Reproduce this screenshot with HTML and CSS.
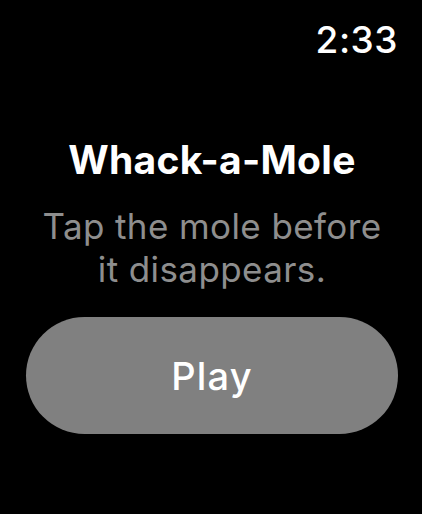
FILE: index.html
```html
<!DOCTYPE html>
<html lang="en">
<head>
  <meta charset="UTF-8" />
  <meta name="viewport" content="width=device-width, initial-scale=1.0"/>
  <title>Whack-a-Mole</title>
  <link rel="stylesheet" href="styles.css">
</head>
<body>

  <!-- Status bar -->
  <header class="status-bar">
    <span class="clock">2:33</span>
  </header>

  <!-- Start screen -->
  <main class="start-screen">
    <h1 class="game-title">Whack-a-Mole</h1>
    <p class="game-hint">Tap the mole before it disappears.</p>
    <button class="play-button">Play</button>
  </main>

</body>
</html>
```

FILE: styles.css
```css
body {
  margin: 0;
  background-color: #000;
  color: #fff;
  font-family: Inter, 'Noto Sans', sans-serif;
  width: 422px;
  height: 514px;
  overflow: hidden;
}

.status-bar {
  display: flex;
  justify-content: flex-end;
  padding: 18px 24px 0 0;
}

.clock {
  font-size: 37px;
  font-weight: 500;
  line-height: 44px;
  letter-spacing: 0.5px;
}

.start-screen {
  display: flex;
  flex-direction: column;
  align-items: center;
  padding: 0 24px 0 26px;
  margin-top: 74px;
}

.game-title {
  margin: 0;
  font-size: 39px;
  font-weight: 700;
  line-height: 48px;
  letter-spacing: 0.3px;
}

.game-hint {
  margin: 21px 0 0;
  max-width: 360px;
  text-align: center;
  font-size: 35px;
  line-height: 43px;
  letter-spacing: 0.4px;
  color: #8e8e8e;
}

.play-button {
  margin-top: 26px;
  width: 100%;
  height: 117px;
  border: none;
  border-radius: 59px;
  background-color: #808080;
  color: #fff;
  font-family: inherit;
  font-size: 38px;
  font-weight: 500;
  letter-spacing: 1.2px;
  cursor: pointer;
}
```
